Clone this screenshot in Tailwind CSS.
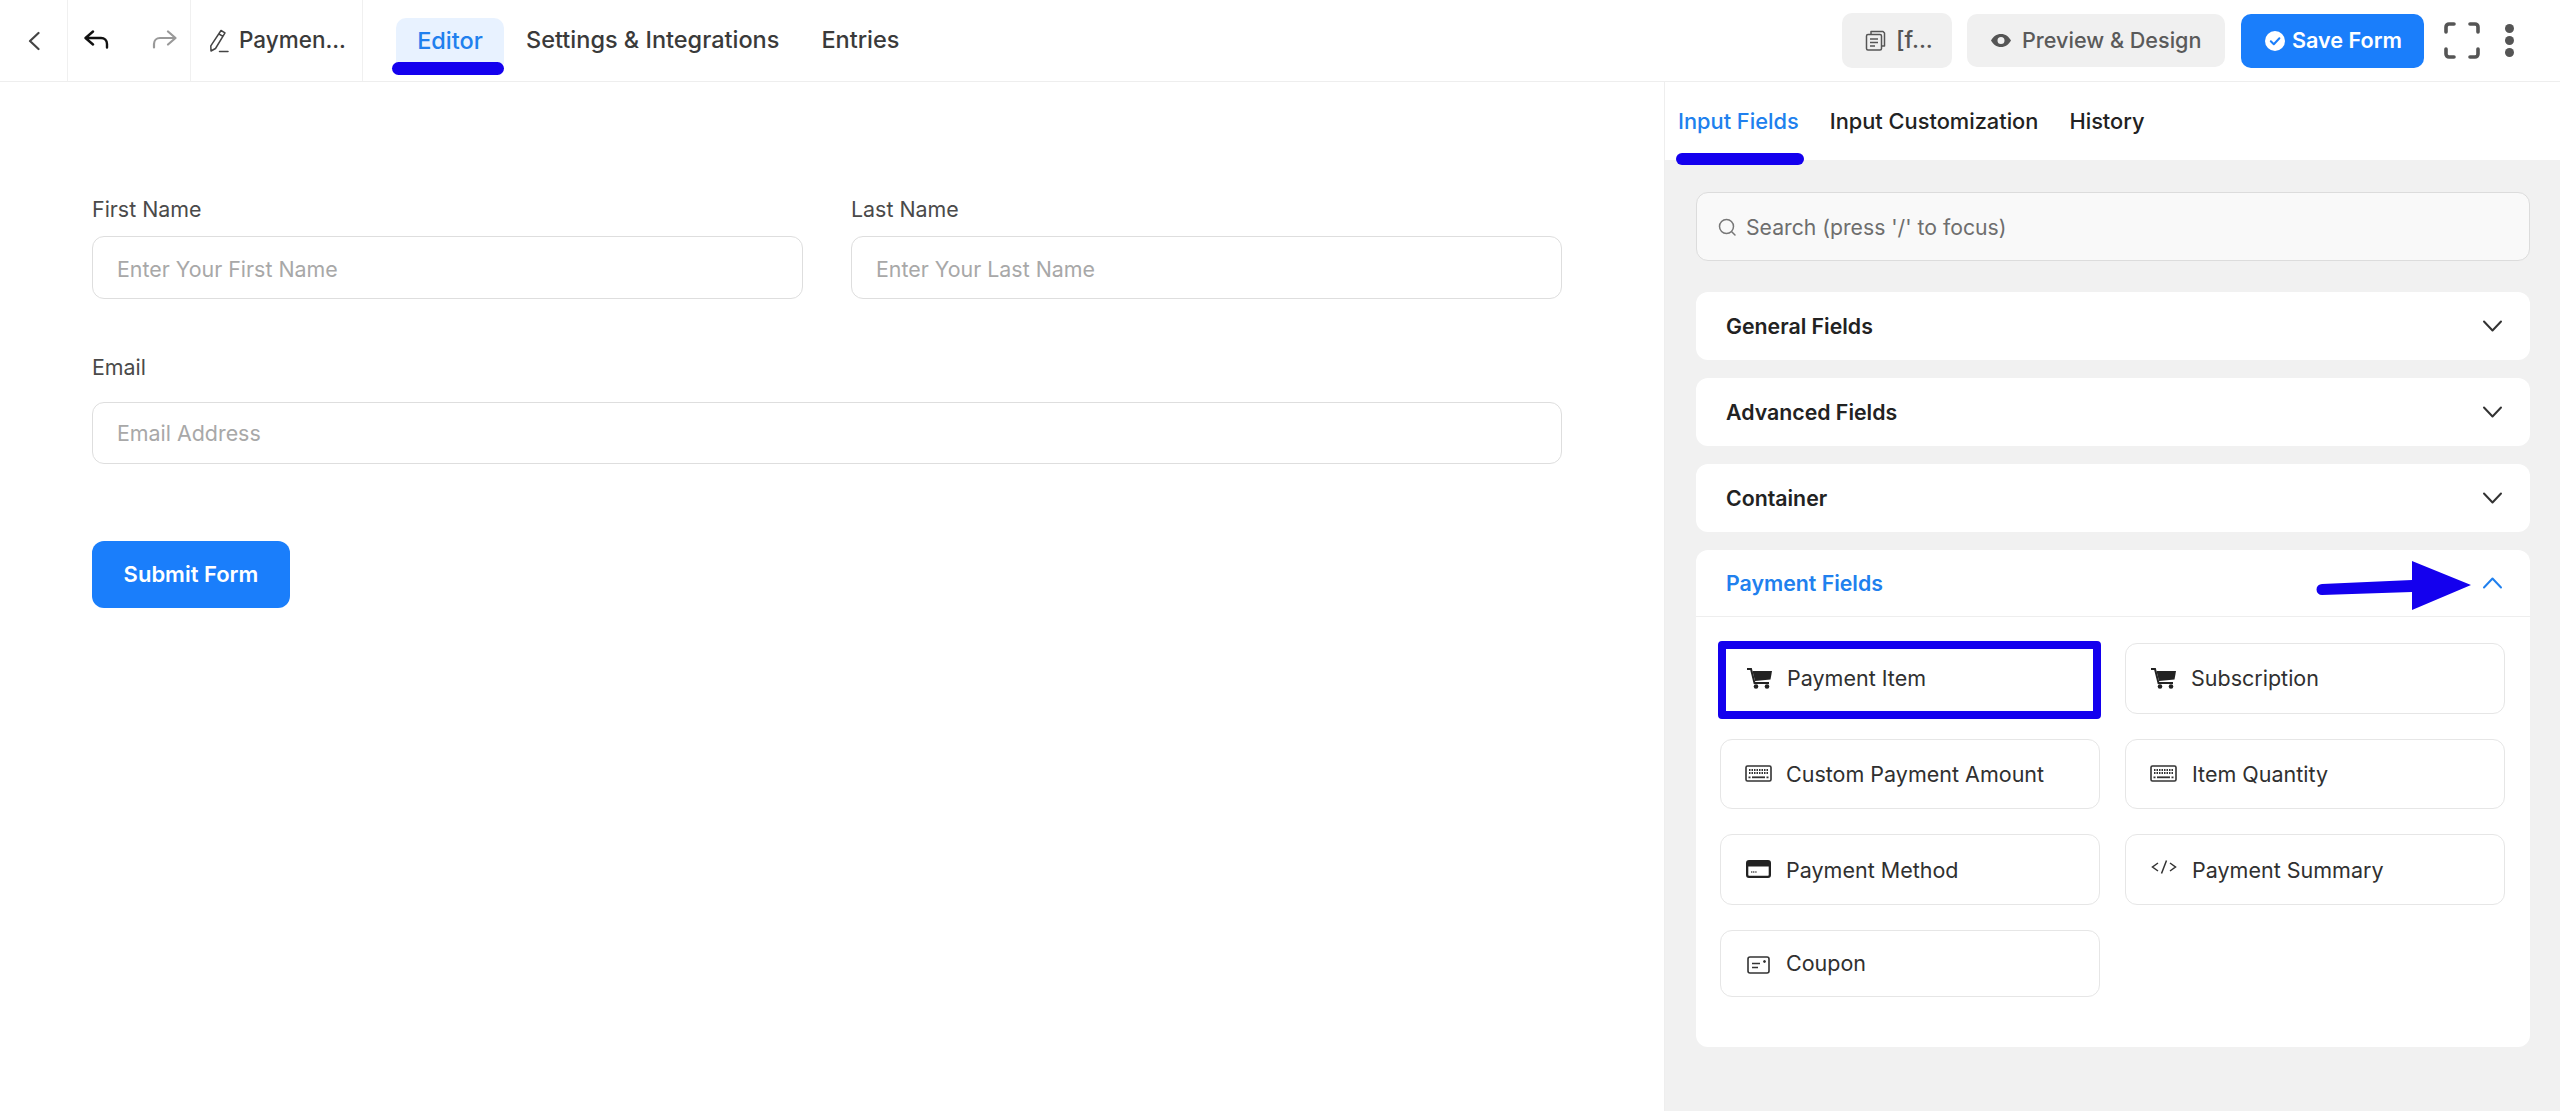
<!DOCTYPE html>
<html lang="en">
<head>
<meta charset="utf-8">
<title>Payment Form Editor</title>
<script src="https://cdn.jsdelivr.net/npm/@tailwindcss/browser@4"></script>
</head>
<body class="[font-family:Inter,sans-serif] bg-white text-[#3a3a3a]">
<div class="w-[2560px] h-[1111px] overflow-hidden flex flex-col">
  <!-- Top bar -->
  <header class="h-[82px] shrink-0 flex items-stretch border-b border-[#eeeeee]">
    <div class="w-[68px] border-r border-[#f0f0f0] flex items-center pl-[28px]">
      <svg class="w-[12px] h-[20px]" viewBox="0 0 12 20" fill="none" stroke="#444" stroke-width="2.2" stroke-linecap="round" stroke-linejoin="round"><path d="M10.5 2 2 10l8.5 8"/></svg>
    </div>
    <div class="w-[123px] border-r border-[#f0f0f0] flex items-center pl-[16px] gap-[43px] pb-[3px]">
      <svg class="w-[25px] h-[19px]" viewBox="0 0 25 19" fill="none" stroke="#111" stroke-width="2.4" stroke-linecap="round" stroke-linejoin="round"><path d="M9 1.5 1.5 8 9 14.500M2 8h15c3.500 0 6 2.500 6 6v3.500"/></svg>
      <svg class="w-[25px] h-[19px]" viewBox="0 0 25 19" fill="none" stroke="#999" stroke-width="2.2" stroke-linecap="round" stroke-linejoin="round"><path d="M16 1.500 23.500 8 16 14.500M23 8H8c-3.500 0-6 2.500-6 6v3.500"/></svg>
    </div>
    <div class="w-[172px] border-r border-[#f0f0f0] flex items-center pl-[18px] gap-[10px]">
      <svg class="w-[20px] h-[24px]" viewBox="0 0 20 24" fill="none" stroke="#444" stroke-width="1.500" stroke-linejoin="round" stroke-linecap="round"><path d="M12 1.500 16 3.800 6.500 19.500 2 22l-.2-5.200zM10 5l4 2.300M10.500 22.500h8.500"/></svg>
      <span class="text-[22.5px] font-medium leading-none">Paymen...</span>
    </div>
    <nav class="flex items-center pl-[33px] text-[23.5px] font-medium">
      <div class="relative w-[108px] h-[46px] rounded-t-[10px] bg-[#e8f2ff] text-[#2080ee] flex items-center justify-center">Editor
        <span class="absolute left-[-4px] right-0 top-[44px] h-[13px] rounded-full bg-[#1400ee]"></span>
      </div>
      <div class="pl-[22px] pr-[21px] pb-[2px]">Settings &amp; Integrations</div>
      <div class="pl-[21px] pb-[2px]">Entries</div>
    </nav>
    <div class="ml-auto flex items-center text-[21.6px] font-medium">
      <div class="w-[110px] h-[55px] rounded-[10px] bg-[#f0f0f0] flex items-center pl-[23px] gap-[10px] text-[#555]">
        <svg class="w-[21px] h-[21px]" viewBox="0 0 21 21" fill="none" stroke="#555" stroke-width="1.500" stroke-linejoin="round"><path d="M6 4.500V1.500h12l1.500 1.500v13h-3"/><rect x="1.500" y="4.500" width="15" height="15.500" rx="1.500"/><path d="M5 9h8M5 12.500h8M5 16h5"/></svg>
        <span class="leading-none text-[23px]">[f...</span>
      </div>
      <div class="ml-[15px] w-[258px] h-[53px] rounded-[10px] bg-[#f0f0f0] flex items-center pl-[24px] gap-[11px] text-[#5a5a5a]">
        <svg class="w-[20px] h-[13px]" viewBox="0 0 20 13"><path fill="#555" fill-rule="evenodd" d="M10 0c4.500 0 8 2.700 10 6.500C18 10.300 14.500 13 10 13S2 10.300 0 6.500C2 2.700 5.500 0 10 0zm0 3a3.500 3.500 0 1 0 0 7 3.500 3.500 0 0 0 0-7z"/></svg>
        <span class="leading-none">Preview &amp; Design</span>
      </div>
      <div class="ml-[16px] w-[183px] h-[54px] rounded-[10px] bg-[#1a7efb] flex items-center pl-[24px] gap-[7px] text-white font-semibold">
        <svg class="w-[20px] h-[20px]" viewBox="0 0 20 20"><circle cx="10" cy="10" r="10" fill="#fff"/><path d="M5.800 10.300 8.800 13.300 14.400 7.200" fill="none" stroke="#1a7efb" stroke-width="2" stroke-linecap="round" stroke-linejoin="round"/></svg>
        <span class="leading-none">Save Form</span>
      </div>
      <svg class="ml-[20px] w-[36px] h-[37px]" viewBox="0 0 36 37" fill="none" stroke="#555" stroke-width="3.600" stroke-linecap="round" stroke-linejoin="round"><path d="M2 10V5a3 3 0 0 1 3-3h5M26 2h5a3 3 0 0 1 3 3v5M34 27v5a3 3 0 0 1-3 3h-5M10 35H5a3 3 0 0 1-3-3v-5"/></svg>
      <div class="ml-[25px] mr-[46px] flex flex-col gap-[3px]">
        <span class="w-[9px] h-[9px] rounded-full bg-[#555]"></span>
        <span class="w-[9px] h-[9px] rounded-full bg-[#555]"></span>
        <span class="w-[9px] h-[9px] rounded-full bg-[#555]"></span>
      </div>
    </div>
  </header>

  <div class="flex-1 flex min-h-0">
    <!-- Form canvas -->
    <main class="w-[1664px] shrink-0 pl-[92px] pt-[113px] text-[21.4px]">
      <div class="w-[1470px] grid grid-cols-[711px_1fr] gap-x-[48px]">
        <div>
          <label class="block h-[28px] leading-[28px] mb-[13px] text-[#4a4a4a]">First Name</label>
          <input class="w-full h-[63px] px-[24px] pt-[2px] rounded-[12px] border border-[#dedede] placeholder:text-[#a8a8a8]" placeholder="Enter Your First Name">
        </div>
        <div>
          <label class="block h-[28px] leading-[28px] mb-[13px] text-[#4a4a4a]">Last Name</label>
          <input class="w-full h-[63px] px-[24px] pt-[2px] rounded-[12px] border border-[#dedede] placeholder:text-[#a8a8a8]" placeholder="Enter Your Last Name">
        </div>
      </div>
      <div class="w-[1470px] mt-[54px]">
        <label class="block h-[28px] leading-[28px] mb-[21px] text-[#4a4a4a]">Email</label>
        <input class="w-full h-[62px] px-[24px] rounded-[12px] border border-[#dedede] placeholder:text-[#a8a8a8]" placeholder="Email Address">
      </div>
      <button class="mt-[77px] w-[198px] h-[67px] rounded-[12px] bg-[#1a7efb] text-white font-semibold text-[22px]">Submit Form</button>
    </main>

    <!-- Right panel -->
    <aside class="flex-1 flex flex-col border-l border-[#eeeeee]">
      <div class="h-[78px] shrink-0 flex items-center pl-[13px] gap-[31px] text-[21.8px] font-medium text-[#222]">
        <div class="relative text-[#2080ee]">Input Fields
          <span class="absolute left-[-2px] right-[-5px] top-[48px] h-[12px] rounded-full bg-[#1400ee]"></span>
        </div>
        <div>Input Customization</div>
        <div>History</div>
      </div>
      <div class="flex-1 bg-[#f1f1f1] pt-[32px] pl-[31px] pr-[30px]">
        <div class="h-[69px] pt-[2px] rounded-[12px] border border-[#dcdcdc] bg-[#f9f9f9] flex items-center pl-[21px] gap-[9px] text-[21.2px] text-[#6e6e6e]">
          <svg class="w-[19px] h-[19px] shrink-0" viewBox="0 0 19 19" fill="none" stroke="#777" stroke-width="1.500" stroke-linecap="round"><circle cx="8.500" cy="8.500" r="7"/><path d="m14 14 3 3"/></svg>
          <span>Search (press '/' to focus)</span>
        </div>
        <div class="mt-[31px] h-[68px] rounded-[12px] bg-white flex items-center justify-between pl-[30px] pr-[27px] text-[21.3px] font-semibold text-[#222]">
          <span class="pt-[2px]">General Fields</span>
          <svg class="w-[21px] h-[12px]" viewBox="0 0 21 12" fill="none" stroke="#333" stroke-width="2" stroke-linecap="round" stroke-linejoin="round"><path d="m2 1.500 8.500 9 8.500-9"/></svg>
        </div>
        <div class="mt-[18px] h-[68px] rounded-[12px] bg-white flex items-center justify-between pl-[30px] pr-[27px] text-[21.3px] font-semibold text-[#222]">
          <span class="pt-[2px]">Advanced Fields</span>
          <svg class="w-[21px] h-[12px]" viewBox="0 0 21 12" fill="none" stroke="#333" stroke-width="2" stroke-linecap="round" stroke-linejoin="round"><path d="m2 1.500 8.500 9 8.500-9"/></svg>
        </div>
        <div class="mt-[18px] h-[68px] rounded-[12px] bg-white flex items-center justify-between pl-[30px] pr-[27px] text-[21.3px] font-semibold text-[#222]">
          <span class="pt-[2px]">Container</span>
          <svg class="w-[21px] h-[12px]" viewBox="0 0 21 12" fill="none" stroke="#333" stroke-width="2" stroke-linecap="round" stroke-linejoin="round"><path d="m2 1.500 8.500 9 8.500-9"/></svg>
        </div>
        <section class="relative mt-[18px] h-[497px] rounded-[12px] bg-white">
          <div class="h-[67px] border-b border-[#eeeeee] flex items-center justify-between pl-[30px] pr-[27px] text-[21.3px] font-semibold text-[#2080ee]">
            <span class="pt-[2px]">Payment Fields</span>
            <svg class="w-[21px] h-[12px]" viewBox="0 0 21 12" fill="none" stroke="#2080ee" stroke-width="2" stroke-linecap="round" stroke-linejoin="round"><path d="m2 10.500 8.500-9 8.500 9"/></svg>
          </div>
          <!-- annotation arrow -->
          <svg class="absolute left-[620px] top-[10px] w-[156px] h-[52px]" viewBox="0 0 156 52"><path fill="#1400ee" d="M6 24 96 20V1l59 24-59 25V32L6 35a5.500 5.500 0 0 1 0-11z"/></svg>
          <div class="grid grid-cols-2 gap-x-[25px] gap-y-[25px] pt-[26px] pl-[24px] pr-[25px] text-[21.5px] text-[#303030]">
            <div class="relative h-[71px] rounded-[12px] border border-[#e6e6e6] flex items-center pl-[26px]">
              <svg class="w-[25px] h-[21px] mr-[15px]" viewBox="0 0 25 21"><path d="M0 1h4l3.500 14H22" fill="none" stroke="#222" stroke-width="2"/><path fill="#222" d="M5.500 3H25l-1.500 8.500L8 13z"/><circle cx="9" cy="18.500" r="2.300" fill="#222"/><circle cx="20" cy="18.500" r="2.300" fill="#222"/></svg>
              <span>Payment Item</span>
              <span class="absolute left-[-3px] right-[-2px] top-[-3px] bottom-[-6px] border-[8px] border-[#1400ee] rounded-[4px]"></span>
            </div>
            <div class="h-[71px] rounded-[12px] border border-[#e6e6e6] flex items-center pl-[25px]">
              <svg class="w-[25px] h-[21px] mr-[15px]" viewBox="0 0 25 21"><path d="M0 1h4l3.500 14H22" fill="none" stroke="#222" stroke-width="2"/><path fill="#222" d="M5.500 3H25l-1.500 8.500L8 13z"/><circle cx="9" cy="18.500" r="2.300" fill="#222"/><circle cx="20" cy="18.500" r="2.300" fill="#222"/></svg>
              <span>Subscription</span>
            </div>
            <div class="h-[70px] pt-[1px] rounded-[12px] border border-[#e6e6e6] flex items-center pl-[24px]">
              <svg class="w-[27px] h-[17px] mr-[14px] mb-[2px]" viewBox="0 0 27 17" fill="none" stroke="#333"><rect x="1" y="1" width="25" height="15" rx="1.500" stroke-width="1.600"/><path d="M4 5h19M4 8h19" stroke-width="2" stroke-dasharray="1.500 1"/><path d="M7 12.300h13" stroke-width="1.800"/><path d="M3.500 12.300h2M21.500 12.300h2" stroke-width="1.800"/></svg>
              <span>Custom Payment Amount</span>
            </div>
            <div class="h-[70px] pt-[1px] rounded-[12px] border border-[#e6e6e6] flex items-center pl-[24px]">
              <svg class="w-[27px] h-[17px] mr-[15px] mb-[2px]" viewBox="0 0 27 17" fill="none" stroke="#333"><rect x="1" y="1" width="25" height="15" rx="1.500" stroke-width="1.600"/><path d="M4 5h19M4 8h19" stroke-width="2" stroke-dasharray="1.500 1"/><path d="M7 12.300h13" stroke-width="1.800"/><path d="M3.500 12.300h2M21.500 12.300h2" stroke-width="1.800"/></svg>
              <span>Item Quantity</span>
            </div>
            <div class="h-[71px] pt-[1px] rounded-[12px] border border-[#e6e6e6] flex items-center pl-[25px]">
              <svg class="w-[25px] h-[18px] mr-[15px] mb-[3px]" viewBox="0 0 25 18"><path fill="#222" fill-rule="evenodd" d="M3 0h19a3 3 0 0 1 3 3v12a3 3 0 0 1-3 3H3a3 3 0 0 1-3-3V3a3 3 0 0 1 3-3zm-.7 6.500V15c0 .4.300.7.700.7h19c.4 0 .7-.3.700-.7V6.500z"/><path d="M5 12h6" stroke="#555" stroke-width="1.400" stroke-dasharray="1.200 .6"/></svg>
              <span>Payment Method</span>
            </div>
            <div class="h-[71px] pt-[1px] rounded-[12px] border border-[#e6e6e6] flex items-center pl-[25px]">
              <svg class="w-[26px] h-[14px] mr-[15px] mb-[6px]" viewBox="0 0 26 14" fill="none" stroke="#333" stroke-width="1.500"><path d="M7 3 1.500 7 7 11M19 3l5.500 4L19 11M15.500 .5 10.500 13.500"/></svg>
              <span>Payment Summary</span>
            </div>
            <div class="h-[67px] rounded-[12px] border border-[#e6e6e6] flex items-center pl-[26px]">
              <svg class="w-[23px] h-[18px] mr-[16px] mt-[2px]" viewBox="0 0 23 18" fill="none" stroke="#333"><rect x="1" y="1" width="21" height="16" rx="2" stroke-width="1.600"/><path d="M5 7.500h8M5 11.500h6" stroke-width="1.600"/><circle cx="17.500" cy="5.500" r="1" fill="#333" stroke-width="1"/></svg>
              <span>Coupon</span>
            </div>
          </div>
        </section>
      </div>
    </aside>
  </div>
</div>
</body>
</html>
